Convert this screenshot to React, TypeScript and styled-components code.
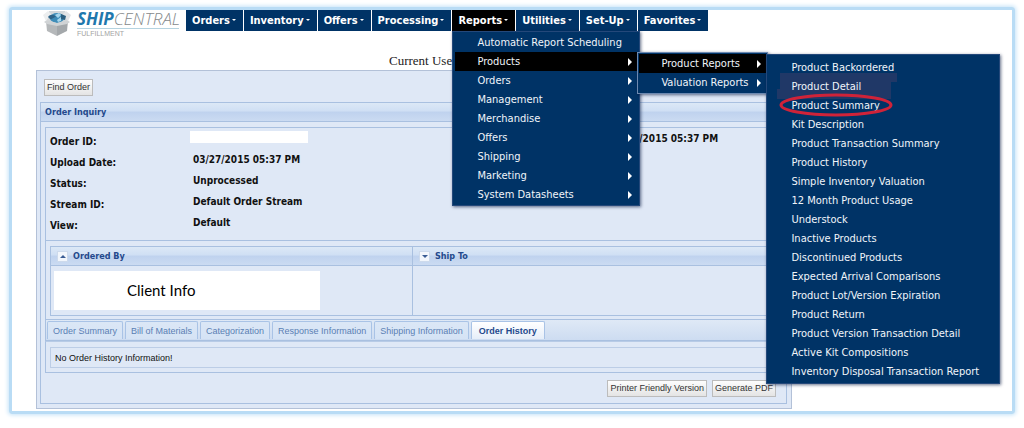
import React from "react";
import styled, { createGlobalStyle, css } from "styled-components";

const UI_FONT = `"DejaVu Sans Condensed", "DejaVu Sans", Verdana, sans-serif`;
const BUTTON_FONT = `"Liberation Sans", Arial, sans-serif`;
const NAVY = "#003366";
const LINE = "#a9c0e0";
const TITLE = "#24498c";

const GlobalStyle = createGlobalStyle`
  *, *::before, *::after { box-sizing: border-box; }
  body { margin: 0; background: #fff; font-family: ${UI_FONT}; color: #111; }
  ul, dl, dd, dt, h2, p { margin: 0; padding: 0; }
  ul { list-style: none; }
  button { font: inherit; color: inherit; }
`;

const Frame = styled.div`
  margin: 7px 9px 13px;
  padding-bottom: 2px;
  border: 3px solid #b9dcf5;
  border-radius: 3px;
  box-shadow: 0 0 4px 1px #c4e3f8;
`;

const Header = styled.header`
  display: flex;
  align-items: flex-start;
  padding-left: 31px;
  height: 42px;
`;

const Logo = styled.a`
  display: flex;
  gap: 6px;
  width: 143px;
  flex: none;
  color: inherit;
  text-decoration: none;
`;

const LogoWords = styled.span`
  display: flex;
  flex-direction: column;
  width: 102px;
`;

const LogoName = styled.span`
  border-bottom: 1px solid #b5d3e0;
  font: italic 300 17px/18px "Open Sans", "Noto Sans", sans-serif;
  color: #85898c;
  white-space: nowrap;

  b {
    font-weight: 700;
    color: #1f78ad;
  }
`;

const LogoTag = styled.span`
  padding-top: 1px;
  font: 7px/8px "Liberation Sans", Arial, sans-serif;
  color: #a3a3a3;
`;

const NavList = styled.ul`
  display: flex;
  gap: 1px;
`;

const NavItem = styled.li`
  position: relative;
`;

const NavLink = styled.a<{ $open?: boolean }>`
  display: flex;
  align-items: center;
  gap: 2px;
  height: 21px;
  padding: 0 7px 1px 6px;
  background: ${(p) => (p.$open ? "#000" : NAVY)};
  color: #fff;
  font-size: 11px;
  font-weight: 700;
  text-decoration: none;
  white-space: nowrap;

  &::after {
    content: "";
    border: 2px solid transparent;
    border-top-color: #fff;
    border-bottom: 0;
  }
`;

const Menu = styled.ul`
  position: absolute;
  z-index: 2;
  padding: 2px;
  background: ${NAVY};
  border: 1px solid #24487a;
  box-shadow: 1px 1px 3px rgba(0, 20, 60, 0.6);
`;

const ReportsMenu = styled(Menu)`
  top: 21px;
  left: 0;
  width: 188px;
  padding: 1px 2px;
`;

const ProductsMenu = styled(Menu)`
  top: 0;
  left: 182px;
  width: 131px;
  padding: 1px;
  border-color: #6d89b0;
`;

const ProductReportsMenu = styled(Menu)`
  top: 0;
  left: 127px;
  width: 234px;
  padding: 3px 2px 2px;
`;

const MenuItem = styled.li`
  position: relative;
`;

const MenuLink = styled.a<{ $open?: boolean }>`
  position: relative;
  z-index: 1;
  display: flex;
  align-items: center;
  justify-content: space-between;
  height: 19px;
  padding: 0 5px 0 22px;
  color: #f1f5fa;
  font-size: 11px;
  text-decoration: none;
  white-space: nowrap;
  ${(p) => p.$open && css`background: #000;`}
`;

const Arrow = styled.span`
  border: 4px solid transparent;
  border-left: 4px solid #fff;
  border-right: 0;
`;

const Mark = styled.svg`
  position: absolute;
  top: -6px;
  left: 6px;
  width: 126px;
  height: 30px;
  z-index: 1;
  pointer-events: none;
`;

const PatchMark = styled(Mark)`
  z-index: 0;
`;

const CurrentUser = styled.p`
  padding-left: 377px;
  height: 18px;
  font: 13px/18px "Liberation Serif", "Times New Roman", serif;
  color: #222;
`;

const Page = styled.main`
  width: 756px;
  max-width: calc(100% - 24px);
  margin-left: 24px;
  padding: 8px 4px 4px 3px;
  background: #dfe8f6;
  border: 1px solid #b3c1d8;
`;

const ActionButton = styled.button`
  height: 17px;
  padding: 0 2px;
  background: linear-gradient(#fdfdfd, #e4e4e4);
  border: 1px solid #bcbcbc;
  font: 9px/15px ${BUTTON_FONT};
  color: #333;
  white-space: nowrap;
`;

const FindBar = styled.div`
  display: flex;
  height: 23px;
  padding-left: 4px;
`;

const Inquiry = styled.section`
  border: 1px solid ${LINE};
`;

const barFill = css`
  background: linear-gradient(#dce8f6 0%, #cfdff4 45%, #bfd2ee 50%, #cbdbf2 100%);
  border-bottom: 1px solid ${LINE};
  color: ${TITLE};
  font-weight: 700;
`;

const InquiryTitle = styled.h2`
  ${barFill}
  height: 19px;
  padding-left: 4px;
  font-size: 9px;
  line-height: 18px;
`;

const InquiryBody = styled.div`
  padding: 5px 4px 0;
`;

const Facts = styled.div`
  display: grid;
  grid-template-columns: 561px 1fr;
  height: 114px;
  padding: 3px 0 0 4px;
  border: 1px solid ${LINE};
  font-size: 10px;
  font-weight: 700;
`;

const FactList = styled.dl`
  display: grid;
  grid-template-columns: 143px 1fr;
  grid-auto-rows: 21px;
`;

const FactName = styled.dt`
  padding-top: 3px;
  line-height: 15px;
`;

const FactValue = styled.dd`
  line-height: 15px;
`;

const Redacted = styled.span`
  display: block;
  width: 118px;
  height: 12px;
  margin-left: -3px;
  background: #fff;
`;

const Parties = styled.div`
  display: grid;
  grid-template-columns: 363px 1fr;
  height: 79px;
  padding: 5px 4px 3px;
  border: 1px solid ${LINE};
  border-top: 0;
`;

const Party = styled.section`
  border: 1px solid ${LINE};
  & + & { border-left: 0; }
`;

const PartyTitle = styled.h2`
  ${barFill}
  display: flex;
  align-items: center;
  gap: 5px;
  height: 19px;
  padding-left: 6px;
  font-size: 9px;
`;

const Toggle = styled.button<{ $up?: boolean }>`
  display: flex;
  align-items: center;
  justify-content: center;
  width: 11px;
  height: 11px;
  padding: 0;
  background: #f2f6fc;
  border: 1px solid #cddaec;

  &::after {
    content: "";
    border: 3px solid transparent;
    ${(p) =>
      p.$up
        ? "border-top: 0; border-bottom-color: #3a5c94;"
        : "border-bottom: 0; border-top-color: #3a5c94;"}
  }
`;

const ClientInfo = styled.p`
  width: 266px;
  height: 39px;
  margin: 5px 3px;
  padding-left: 73px;
  background: #fff;
  font: 15px/38px Lato, sans-serif;
  color: #000;
`;

const TabStrip = styled.div`
  display: flex;
  align-items: flex-end;
  gap: 2px;
  height: 21px;
  padding: 1px 1px 1px;
  border: 1px solid ${LINE};
  border-top: 0;
  background: linear-gradient(#dfe9f6, #cddcf1);
`;

const Tab = styled.button<{ $active?: boolean }>`
  height: 18px;
  padding: 0 ${(p) => (p.$active ? "7px" : "5px")};
  border: 1px solid #a9c3e6;
  border-bottom: 0;
  border-radius: 2px 2px 0 0;
  background: ${(p) => (p.$active ? "linear-gradient(#ffffff, #e6eef9)" : "linear-gradient(#dbe7f6, #d5e3f5)")};
  color: ${(p) => (p.$active ? TITLE : "#5a80b4")};
  font: 9px ${BUTTON_FONT};
  font-weight: ${(p) => (p.$active ? 700 : 400)};
  white-space: nowrap;
`;

const TabPanel = styled.div`
  padding: 5px 4px 4px;
  border: 1px solid ${LINE};
  border-top-color: #b8cbe6;
`;

const Notice = styled.p`
  height: 21px;
  padding-left: 4px;
  border: 1px solid #bccde6;
  font: 9px/20px ${BUTTON_FONT};
`;

const Actions = styled.div`
  display: flex;
  justify-content: flex-end;
  gap: 5px;
  padding: 7px 10px 6px;
`;

const reportGroups = [
  "Orders", "Management", "Merchandise", "Offers", "Shipping", "Marketing", "System Datasheets",
];

const productReports = [
  "Product Backordered", "Product Detail", "Product Summary", "Kit Description",
  "Product Transaction Summary", "Product History", "Simple Inventory Valuation",
  "12 Month Product Usage", "Understock", "Inactive Products", "Discontinued Products",
  "Expected Arrival Comparisons", "Product Lot/Version Expiration", "Product Return",
  "Product Version Transaction Detail", "Active Kit Compositions",
  "Inventory Disposal Transaction Report",
];

const tabs = [
  "Order Summary", "Bill of Materials", "Categorization", "Response Information",
  "Shipping Information", "Order History",
];

const facts: [string, React.ReactNode][] = [
  ["Order ID:", <Redacted key="id" />],
  ["Upload Date:", "03/27/2015 05:37 PM"],
  ["Status:", "Unprocessed"],
  ["Stream ID:", "Default Order Stream"],
  ["View:", "Default"],
];

function BoxIcon() {
  return (
    <svg width="28" height="27" viewBox="0 0 28 27" aria-hidden="true">
      <path d="M3 10 L6 1 L22 1 L25 10 L14 14Z" fill="#d3d8db" />
      <path d="M3 11 L0 5 L5 1 L8 4Z" fill="#eceeef" />
      <path d="M25 11 L28 5 L23 1 L20 4Z" fill="#e2e4e6" />
      <ellipse cx="14" cy="8" rx="7" ry="5" fill="#3f8db8" />
      <path d="M5 7 C7 4 11 4 13 7 C11 7 9 10 7 9Z" fill="#2f6488" />
      <path d="M12 5 L16 3 L18 5 L15 8Z M14 10 L18 7 L18 11 L15 12Z" fill="#a8d6ec" />
      <path d="M18 4 L23 6 L22 10 L18 9Z" fill="#2b5f80" />
      <path d="M3 11 L14 14 L14 26 L4 21Z" fill="#b5b8ba" />
      <path d="M25 11 L14 14 L14 26 L24 21Z" fill="#a4a8ab" />
      <path d="M1 12 L4 10 L14 13 L24 10 L27 12 L24 14 L14 16 L4 14Z" fill="#d0d3d5" />
    </svg>
  );
}

function ProductReportList() {
  return (
    <ProductReportsMenu>
      {productReports.map((name) => (
        <MenuItem key={name}>
          {name === "Product Detail" && (
            <PatchMark viewBox="0 0 126 30" aria-hidden="true">
              <path d="M5 2 H122 V11 H116 V28 H2 V18 H5Z" fill="#203867" />
            </PatchMark>
          )}
          <MenuLink href="#">{name}</MenuLink>
          {name === "Product Summary" && (
            <Mark viewBox="0 0 126 30" aria-hidden="true">
              <ellipse cx="61" cy="15" rx="55" ry="10" fill="none" stroke="#cf2339" strokeWidth="3" />
            </Mark>
          )}
        </MenuItem>
      ))}
    </ProductReportsMenu>
  );
}

function ReportsDropdown() {
  return (
    <ReportsMenu>
      <MenuItem>
        <MenuLink href="#">Automatic Report Scheduling</MenuLink>
      </MenuItem>
      <MenuItem>
        <MenuLink href="#" $open>Products<Arrow /></MenuLink>
        <ProductsMenu>
          <MenuItem>
            <MenuLink href="#" $open>Product Reports<Arrow /></MenuLink>
            <ProductReportList />
          </MenuItem>
          <MenuItem>
            <MenuLink href="#">Valuation Reports<Arrow /></MenuLink>
          </MenuItem>
        </ProductsMenu>
      </MenuItem>
      {reportGroups.map((name) => (
        <MenuItem key={name}>
          <MenuLink href="#">{name}<Arrow /></MenuLink>
        </MenuItem>
      ))}
    </ReportsMenu>
  );
}

export default function App() {
  return (
    <>
      <GlobalStyle />
      <Frame>
        <Header>
          <Logo href="#">
            <BoxIcon />
            <LogoWords>
              <LogoName><b>SHIP</b>CENTRAL</LogoName>
              <LogoTag>FULFILLMENT</LogoTag>
            </LogoWords>
          </Logo>
          <nav>
            <NavList>
              {["Orders", "Inventory", "Offers", "Processing", "Reports", "Utilities", "Set-Up", "Favorites"].map((name) => (
                <NavItem key={name}>
                  <NavLink href="#" $open={name === "Reports"}>{name}</NavLink>
                  {name === "Reports" && <ReportsDropdown />}
                </NavItem>
              ))}
            </NavList>
          </nav>
        </Header>
        <CurrentUser>Current User</CurrentUser>
        <Page>
          <FindBar>
            <ActionButton type="button">Find Order</ActionButton>
          </FindBar>
          <Inquiry>
            <InquiryTitle>Order Inquiry</InquiryTitle>
            <InquiryBody>
              <Facts>
                <FactList>
                  {facts.map(([name, value]) => (
                    <React.Fragment key={name}>
                      <FactName>{name}</FactName>
                      <FactValue>{value}</FactValue>
                    </React.Fragment>
                  ))}
                </FactList>
                <FactValue as="span">03/27/2015 05:37 PM</FactValue>
              </Facts>
              <Parties>
                <Party>
                  <PartyTitle><Toggle type="button" aria-label="Collapse Ordered By" $up />Ordered By</PartyTitle>
                  <ClientInfo>Client Info</ClientInfo>
                </Party>
                <Party>
                  <PartyTitle><Toggle type="button" aria-label="Expand Ship To" />Ship To</PartyTitle>
                </Party>
              </Parties>
              <TabStrip role="tablist">
                {tabs.map((name) => (
                  <Tab key={name} type="button" role="tab" aria-selected={name === "Order History"} $active={name === "Order History"}>
                    {name}
                  </Tab>
                ))}
              </TabStrip>
              <TabPanel role="tabpanel">
                <Notice>No Order History Information!</Notice>
              </TabPanel>
            </InquiryBody>
            <Actions>
              <ActionButton type="button">Printer Friendly Version</ActionButton>
              <ActionButton type="button">Generate PDF</ActionButton>
            </Actions>
          </Inquiry>
        </Page>
      </Frame>
    </>
  );
}
